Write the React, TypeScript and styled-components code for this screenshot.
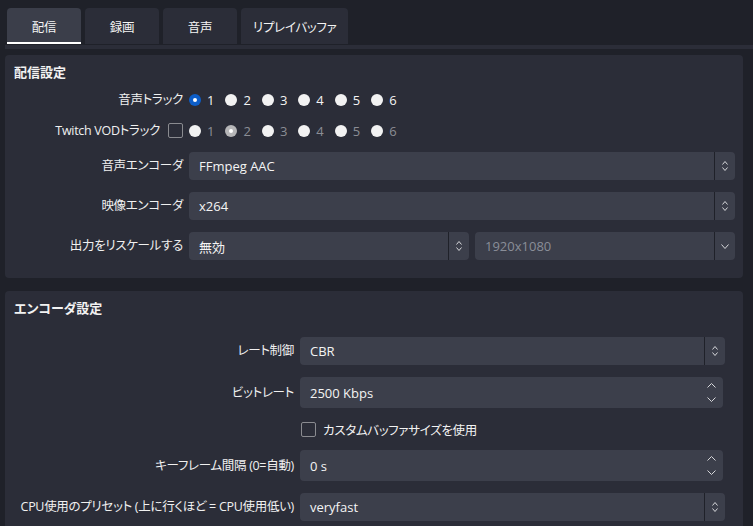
import React from "react";
import styled, { createGlobalStyle, css } from "styled-components";

const GlobalStyle = createGlobalStyle`
  html, body {
    margin: 0;
    padding: 0;
    background: #1f2129;
  }
  body {
    font-family: "Open Sans", "Noto Sans CJK JP", sans-serif;
    font-size: 12.5px;
    color: #f2f2f2;
    font-feature-settings: "palt";
  }
`;

const Window = styled.div`
  width: 753px;
  height: 526px;
  overflow: hidden;
  background: #1f2129;
`;

const TabBar = styled.div`
  display: flex;
  gap: 4px;
  padding: 8px 0 0 7px;
`;

const Tab = styled.div<{ $active?: boolean }>`
  height: 36px;
  min-width: 74px;
  box-sizing: border-box;
  padding: 0 12px;
  display: flex;
  align-items: center;
  justify-content: center;
  border-radius: 4px 4px 0 0;
  letter-spacing: -0.3px;
  background: ${(p) => (p.$active ? "#3b3e4a" : "#2b2d38")};
  color: #f4f4f4;
  box-shadow: ${(p) => (p.$active ? "inset 0 -2px 0 #ffffff" : "none")};
`;

const TabRule = styled.div`
  height: 4px;
  margin: 1px 0 0 5px;
  background: #2b2d38;
`;

const Content = styled.div`
  display: flex;
  flex-direction: column;
  gap: 13px;
  padding: 6px 10px 0 5px;
`;

const Panel = styled.section<{ $padRight: number }>`
  background: #2b2d38;
  border-radius: 4px;
  padding: 8px ${(p) => p.$padRight}px 18px 9px;
`;

const PanelTitle = styled.div<{ $gap: number }>`
  font-weight: bold;
  font-size: 13px;
  line-height: 18px;
  margin-bottom: ${(p) => p.$gap}px;
`;

const Form = styled.div<{ $labelWidth: number }>`
  display: grid;
  grid-template-columns: ${(p) => p.$labelWidth}px 1fr;
  column-gap: 6px;
  row-gap: 12px;
  align-items: center;
`;

const Label = styled.div`
  display: flex;
  justify-content: flex-end;
  align-items: center;
  gap: 8px;
  white-space: nowrap;
  color: #f0f0f0;
  line-height: 18px;
  letter-spacing: -0.3px;
`;

const RadioGroup = styled.div`
  display: flex;
  align-items: center;
  gap: 11px;
  height: 19px;
`;

const RadioItem = styled.div<{ $disabled?: boolean }>`
  display: flex;
  align-items: center;
  gap: 6px;
  font-size: 13px;
  color: ${(p) => (p.$disabled ? "#8b8d95" : "#f4f4f4")};
`;

const RadioDot = styled.span<{ $checked?: boolean; $disabled?: boolean }>`
  width: 12px;
  height: 12px;
  border-radius: 50%;
  box-sizing: border-box;
  display: inline-flex;
  align-items: center;
  justify-content: center;
  background: ${(p) =>
    p.$checked ? (p.$disabled ? "#b6b6b8" : "#0d5ec8") : "#f2f2f2"};
  ${(p) =>
    p.$checked &&
    css`
      &::after {
        content: "";
        width: 4px;
        height: 4px;
        border-radius: 50%;
        background: #ffffff;
      }
    `}
`;

const CheckBox = styled.span`
  width: 15px;
  height: 15px;
  box-sizing: border-box;
  border: 1px solid #8a8b90;
  border-radius: 2px;
  flex-shrink: 0;
`;

const CheckRow = styled.div`
  display: flex;
  align-items: center;
  gap: 7px;
  height: 18px;
  padding-left: 1px;
  letter-spacing: -0.3px;
`;

const FieldRow = styled.div`
  display: flex;
  gap: 6px;
`;

const Field = styled.div<{ $height: number; $trim?: number; $width?: number }>`
  height: ${(p) => p.$height}px;
  ${(p) => (p.$width ? `width: ${p.$width}px; flex-shrink: 0;` : "flex: 1;")}
  margin-right: ${(p) => p.$trim ?? 0}px;
  background: #3c3f4b;
  border-radius: 4px;
  display: flex;
  align-items: stretch;
  overflow: hidden;
`;

const FieldText = styled.div<{ $disabled?: boolean }>`
  flex: 1;
  display: flex;
  align-items: center;
  padding-left: 10px;
  font-size: 13px;
  color: ${(p) => (p.$disabled ? "#8a8e98" : "#f4f4f4")};
`;

const ArrowBox = styled.div<{ $divider?: boolean; $width: number; $gap: number }>`
  width: ${(p) => p.$width}px;
  border-left: ${(p) => (p.$divider ? "1px solid #1f2129" : "none")};
  display: flex;
  flex-direction: column;
  align-items: center;
  justify-content: center;
  gap: ${(p) => p.$gap}px;
`;

const Chevron = ({ dir, w, h }: { dir: "up" | "down"; w: number; h: number }) => (
  <svg width={w} height={h} viewBox={`0 0 ${w} ${h}`} style={{ display: "block" }}>
    <polyline
      points={
        dir === "up"
          ? `0.5,${h - 0.5} ${w / 2},0.5 ${w - 0.5},${h - 0.5}`
          : `0.5,0.5 ${w / 2},${h - 0.5} ${w - 0.5},0.5`
      }
      fill="none"
      stroke="#d6d7da"
      strokeWidth="1"
    />
  </svg>
);

type ComboProps = {
  value: string;
  height?: number;
  disabled?: boolean;
  single?: boolean;
  width?: number;
};

const Combo = ({ value, height = 28, disabled, single, width }: ComboProps) => (
  <Field $height={height} $width={width}>
    <FieldText $disabled={disabled}>{value}</FieldText>
    <ArrowBox $divider $width={20} $gap={2}>
      {!single && <Chevron dir="up" w={6} h={4} />}
      <Chevron dir="down" w={single ? 8 : 6} h={single ? 5 : 4} />
    </ArrowBox>
  </Field>
);

const Spin = ({ value }: { value: string }) => (
  <Field $height={31} $trim={2}>
    <FieldText>{value}</FieldText>
    <ArrowBox $width={24} $gap={9}>
      <Chevron dir="up" w={9} h={5} />
      <Chevron dir="down" w={9} h={5} />
    </ArrowBox>
  </Field>
);

const tracks = [1, 2, 3, 4, 5, 6];

export default function App() {
  return (
    <Window>
      <GlobalStyle />
      <TabBar>
        <Tab $active>配信</Tab>
        <Tab>録画</Tab>
        <Tab>音声</Tab>
        <Tab>リプレイバッファ</Tab>
      </TabBar>
      <TabRule />
      <Content>
        <Panel $padRight={8}>
          <PanelTitle $gap={9}>配信設定</PanelTitle>
          <Form $labelWidth={169}>
            <Label>音声トラック</Label>
            <RadioGroup>
              {tracks.map((n) => (
                <RadioItem key={n}>
                  <RadioDot $checked={n === 1} />
                  {n}
                </RadioItem>
              ))}
            </RadioGroup>

            <Label>
              Twitch VODトラック
              <CheckBox />
            </Label>
            <RadioGroup>
              {tracks.map((n) => (
                <RadioItem key={n} $disabled>
                  <RadioDot $checked={n === 2} $disabled />
                  {n}
                </RadioItem>
              ))}
            </RadioGroup>

            <Label>音声エンコーダ</Label>
            <Combo value="FFmpeg AAC" />

            <Label>映像エンコーダ</Label>
            <Combo value="x264" />

            <Label>出力をリスケールする</Label>
            <FieldRow>
              <Combo value="無効" width={280} />
              <Combo value="1920x1080" disabled single />
            </FieldRow>
          </Form>
        </Panel>

        <Panel $padRight={18}>
          <PanelTitle $gap={20}>エンコーダ設定</PanelTitle>
          <Form $labelWidth={280}>
            <Label>レート制御</Label>
            <Combo value="CBR" />

            <Label>ビットレート</Label>
            <Spin value="2500 Kbps" />

            <div />
            <CheckRow>
              <CheckBox />
              カスタムバッファサイズを使用
            </CheckRow>

            <Label>キーフレーム間隔 (0=自動)</Label>
            <Spin value="0 s" />

            <Label>CPU使用のプリセット (上に行くほど = CPU使用低い)</Label>
            <Combo value="veryfast" />
          </Form>
        </Panel>
      </Content>
    </Window>
  );
}
